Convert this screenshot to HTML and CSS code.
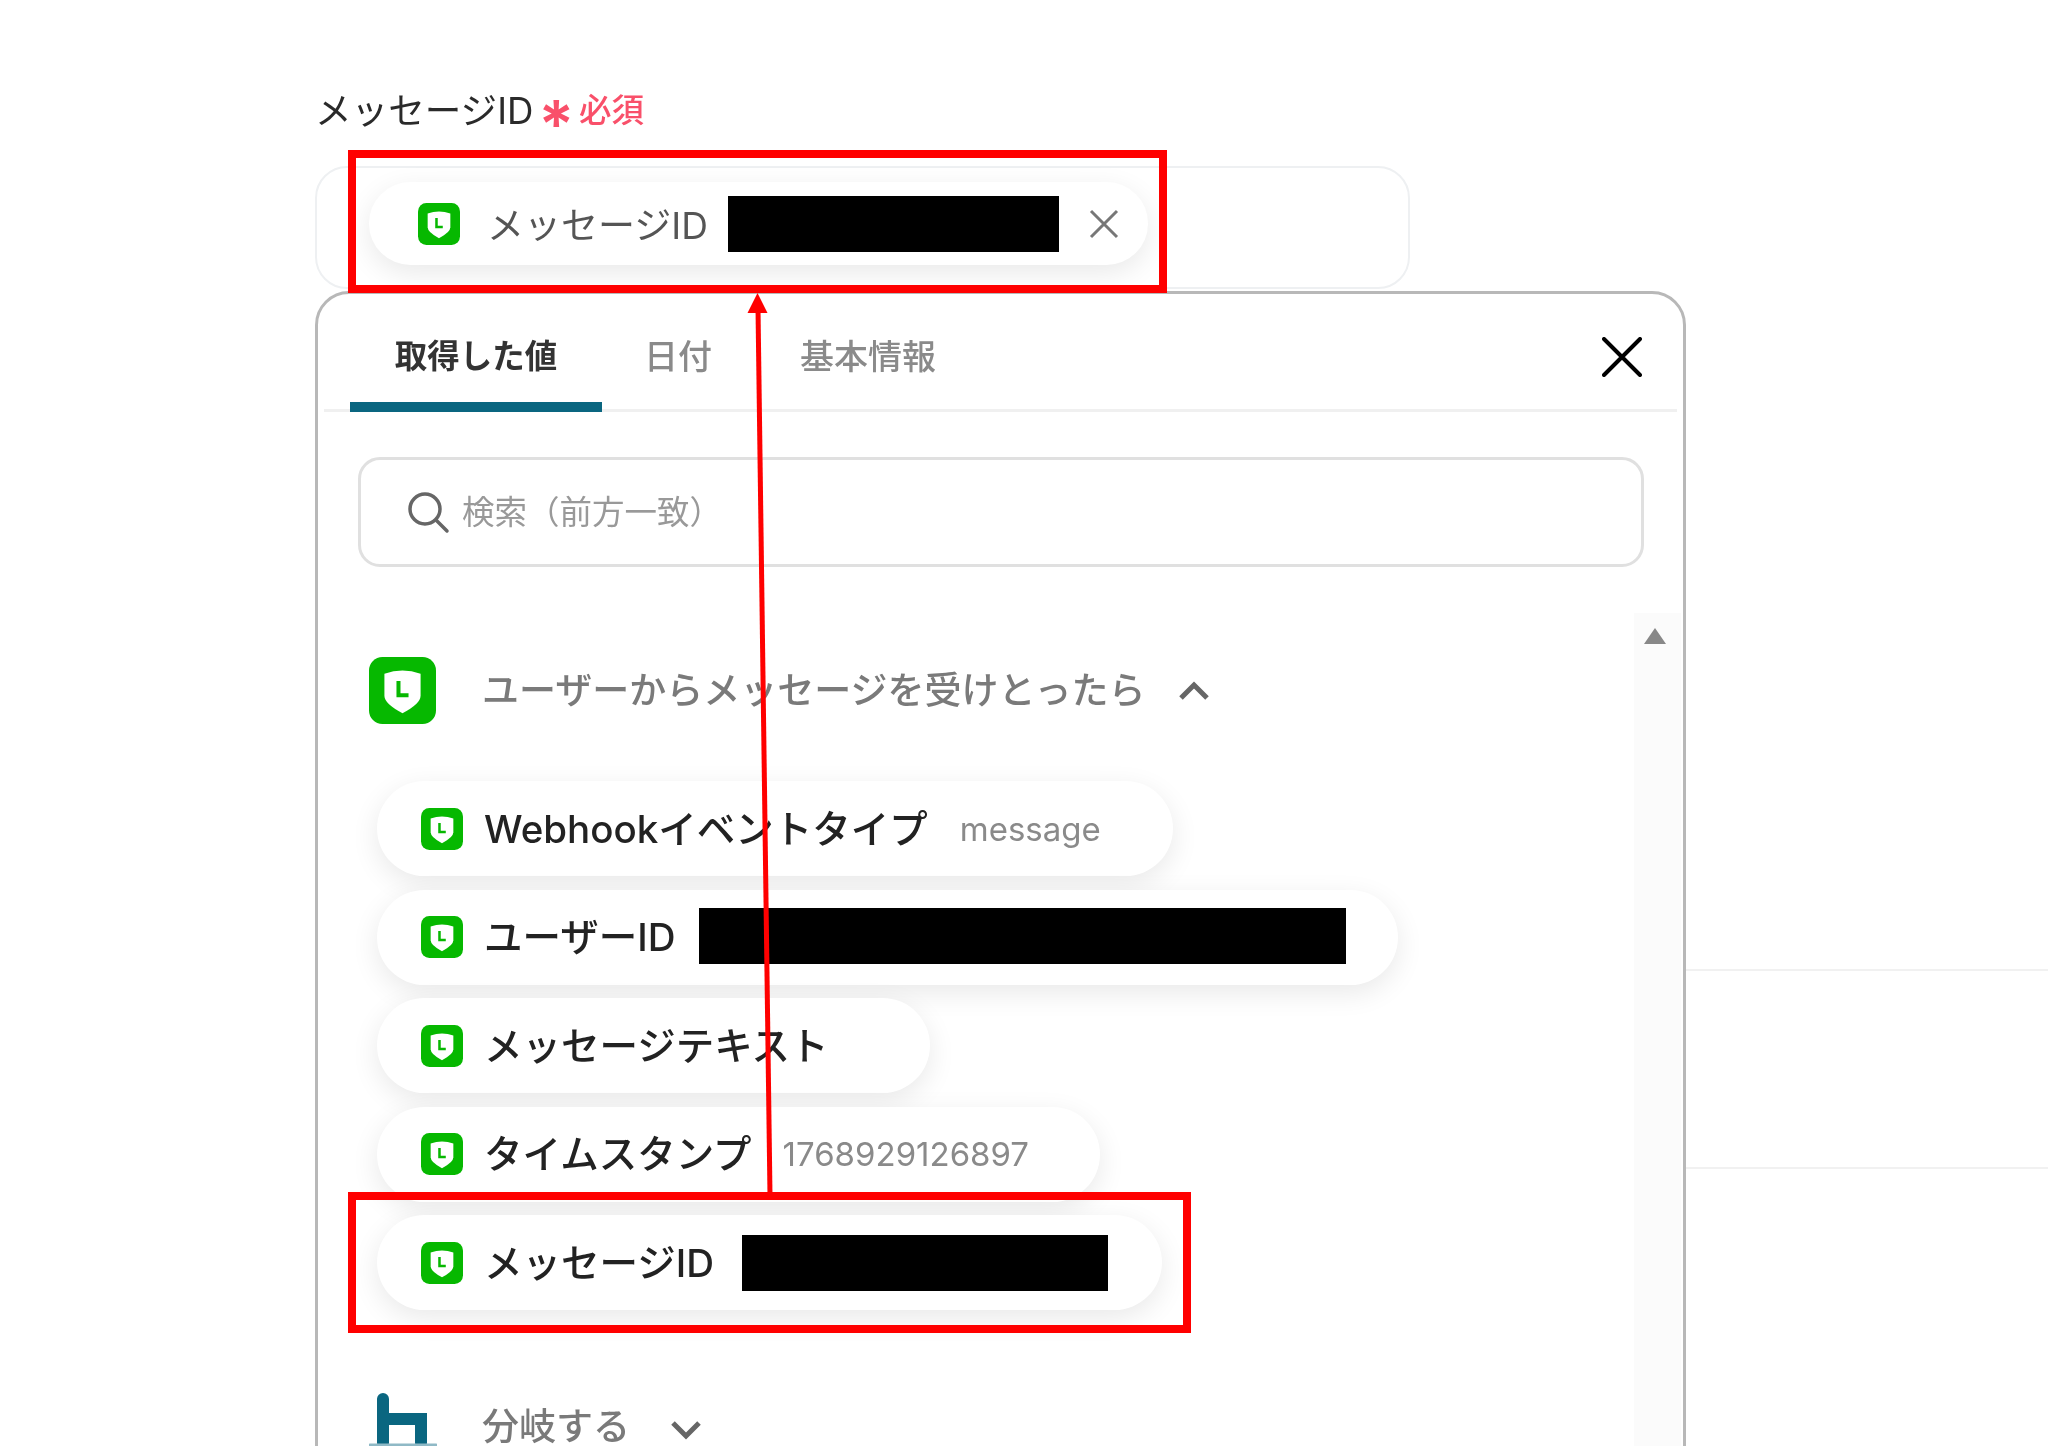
FILE: index.html
```html
<!DOCTYPE html>
<html lang="ja">
<head>
<meta charset="utf-8">
<title>メッセージID</title>
<link rel="stylesheet" href="styles.css">
</head>
<body>
<svg class="defs" width="0" height="0" aria-hidden="true">
  <symbol id="line" viewBox="0 0 100 100">
    <rect width="100" height="100" rx="20" fill="#06b800"/>
    <path d="M23 25Q50 15 77 25V58Q77 70 50 84Q23 70 23 58Z" fill="#fff"/>
    <path d="M44 36V57H59" fill="none" stroke="#06b800" stroke-width="6"/>
  </symbol>
</svg>
<div class="page">
  <div class="form">
    <div class="label"><span>メッセージID</span><span class="req"><span class="star">*</span>必須</span></div>
    <div class="field">
      <div class="chip chip-top">
        <svg class="ico"><use href="#line"/></svg>
        <span class="chip-name">メッセージID</span>
        <span class="mask mask-top"></span>
        <svg class="chip-x" viewBox="0 0 32 32"><path d="M3 3L29 29M29 3L3 29"/></svg>
      </div>
    </div>
    <div class="panel">
      <div class="tabs">
        <div class="tab active">取得した値</div>
        <div class="tab">日付</div>
        <div class="tab">基本情報</div>
        <svg class="close" viewBox="0 0 40 40"><path d="M2 2L38 38M38 2L2 38"/></svg>
      </div>
      <div class="search">
        <svg class="search-ico" viewBox="0 0 44 44"><circle cx="19" cy="19" r="15"/><path d="M30 30L41 41"/></svg>
        <span class="search-text">検索（前方一致）</span>
      </div>
      <div class="body">
        <div class="list">
          <div class="group">
            <svg class="group-ico"><use href="#line"/></svg>
            <span class="group-name">ユーザーからメッセージを受けとったら</span>
            <svg class="chev" viewBox="0 0 32 20"><path d="M3 17L16 4L29 17"/></svg>
          </div>
          <div class="chips">
            <div class="chip chip-a">
              <svg class="ico"><use href="#line"/></svg>
              <span class="chip-name">Webhookイベントタイプ</span>
              <span class="val val-a">message</span>
            </div>
            <div class="chip chip-b">
              <svg class="ico"><use href="#line"/></svg>
              <span class="chip-name">ユーザーID</span>
              <span class="mask mask-b"></span>
            </div>
            <div class="chip chip-c">
              <svg class="ico"><use href="#line"/></svg>
              <span class="chip-name">メッセージテキスト</span>
            </div>
            <div class="chip chip-d">
              <svg class="ico"><use href="#line"/></svg>
              <span class="chip-name">タイムスタンプ</span>
              <span class="val val-d">1768929126897</span>
            </div>
            <div class="chip chip-e">
              <svg class="ico"><use href="#line"/></svg>
              <span class="chip-name">メッセージID</span>
              <span class="mask mask-e"></span>
            </div>
          </div>
          <div class="group group-next">
            <svg class="branch-ico" viewBox="0 0 68 56"><path d="M14 6V50M14 26H52V50"/><path class="foot" d="M1 52H67"/></svg>
            <span class="group-name">分岐する</span>
            <svg class="chev" viewBox="0 0 32 20"><path d="M3 3L16 16L29 3"/></svg>
          </div>
        </div>
        <div class="scroll"><div class="scroll-up"></div></div>
      </div>
    </div>
  </div>
  <div class="side">
    <div class="side-line first"></div>
    <div class="side-line second"></div>
  </div>
  <div class="mark mark-top"></div>
  <div class="mark mark-bottom"></div>
  <svg class="arrow" viewBox="0 0 30 902"><path class="shaft" d="M24 902L12 15"/><path class="head" d="M11.500 0L1.500 20H21.500Z"/></svg>
</div>
</body>
</html>
```
FILE: styles.css
```css
* { box-sizing: border-box; }
html, body { margin: 0; padding: 0; background: #fff; }
body { font-family: Inter, "Noto Sans CJK JP", "Noto Sans", sans-serif; color: #333; }
.defs { position: absolute; }
.page { position: relative; width: 2048px; height: 1446px; overflow: hidden; display: flex; padding: 88px 0 0 315px; }
.form { flex: 0 0 1371px; filter: blur(.5px); }
.side { flex: 1; }
.side-line { height: 2px; background: #f1f1f1; }
.side-line.first { margin-top: 881px; }
.side-line.second { margin-top: 196px; }

.label { height: 46px; display: flex; align-items: center; gap: 5px; font-size: 36.600px; line-height: 46px; color: #2a2a2a; }
.req { color: #f9506a; font-size: 32.500px; font-weight: 500; display: flex; align-items: center; gap: 5px; }
.star { font-size: 66px; line-height: 46px; height: 46px; margin-top: 26px; font-weight: 600; }

.field { margin-top: 32px; width: 1095px; height: 123px; border: 2px solid #eef0f2; border-radius: 32px; padding: 14px 0 0 52px; }
.chip { display: flex; align-items: center; background: #fff; border-radius: 48px; box-shadow: 0 8px 28px rgba(0,0,0,.09); font-size: 38.500px; font-weight: 500; color: #222; white-space: nowrap; }
.chip-top { width: 779px; height: 83px; padding-left: 49px; font-weight: 400; color: #555; }
.ico { width: 42px; height: 42px; flex: none; }
.chip-name { margin-left: 21px; padding-bottom: 6px; }
.chip-top .chip-name { margin-left: 27px; padding-bottom: 2px; font-size: 37px; }
.mask { background: #000; flex: none; height: 56px; }
.mask-top { width: 331px; margin-left: 20px; }
.chip-x { width: 32px; height: 32px; margin-left: 29px; }
.chip-x path { fill: none; stroke: #777; stroke-width: 3; }

.panel { margin-top: 2px; width: 1371px; height: 1200px; border: 3px solid #b8b8b8; border-radius: 34px; background: #fff; position: relative; }
.tabs { height: 118px; margin: 0 6px; display: flex; padding-left: 26px; border-bottom: 3px solid #f0f0f0; position: relative; }
.tab { height: 118px; padding: 35px 46px 0 42px; font-size: 34px; line-height: 56px; font-weight: 500; color: #8a8a8a; }
.tab.active { width: 252px; padding: 35px 0 0; text-align: center; font-size: 32.500px; font-weight: 700; color: #333; border-bottom: 10px solid #0a6680; border-radius: 8px 8px 0 0; }
.close { position: absolute; right: 35px; top: 43px; width: 40px; height: 40px; }
.close path { fill: none; stroke: #000; stroke-width: 4; stroke-linecap: round; }

.search { margin: 45px 0 0 40px; width: 1286px; height: 110px; border: 3px solid #e0e0e0; border-radius: 22px; display: flex; align-items: center; padding-left: 45px; gap: 12px; font-size: 32.500px; color: #999; }
.search-ico { width: 44px; height: 44px; flex: none; }
.search-ico circle, .search-ico path { fill: none; stroke: #666; stroke-width: 3.500; stroke-linecap: round; }
.search-text { padding-bottom: 6px; }

.body { display: flex; margin-top: 46px; }
.list { flex: 1; padding: 44px 0 0 51px; }
.scroll { flex: 0 0 47px; height: 900px; background: #fbfbfb; margin-right: 2px; padding-top: 15px; }
.scroll-up { width: 0; height: 0; margin-left: 10px; border-left: 11px solid transparent; border-right: 11px solid transparent; border-bottom: 16px solid #888; }

.group { display: flex; align-items: center; height: 67px; }
.group-ico { width: 67px; height: 67px; flex: none; }
.group-name { margin-left: 46px; padding-bottom: 6px; font-size: 37px; font-weight: 500; color: #7a7a7a; white-space: nowrap; }
.chev { width: 32px; height: 20px; margin-left: 33px; flex: none; }
.chev path { fill: none; stroke: #666; stroke-width: 5; }

.chips { margin: 57px 0 0 8px; display: flex; flex-direction: column; gap: 13.500px; }
.chip-a, .chip-b, .chip-c, .chip-d, .chip-e { height: 95px; padding-left: 44px; }
.chip-a { width: 796px; }
.chip-b { width: 1021px; }
.chip-c { width: 553px; }
.chip-d { width: 723px; }
.chip-e { width: 785px; }
.val { font-size: 33px; font-weight: 400; color: #8a8a8a; }
.val-a { margin-left: 32px; }
.val-d { margin-left: 31px; }
.mask-b { width: 647px; margin-left: 23px; margin-bottom: 2px; }
.mask-e { width: 366px; margin-left: 28px; }

.group-next { margin-top: 83px; }
.branch-ico { width: 68px; height: 56px; flex: none; align-self: flex-start; }
.branch-ico path { fill: none; stroke: #0a6680; stroke-width: 12; stroke-linecap: round; }
.branch-ico .foot { stroke: #8fb9c6; stroke-width: 3; }
.group-next .group-name { margin: 0 0 0 45px; padding-bottom: 0; font-size: 37px; line-height: 37px; }
.group-next .chev { margin: 6px 0 0 40px; }

.mark { position: absolute; border: 8px solid #f00; }
.mark-top { left: 348px; top: 150px; width: 819px; height: 143px; }
.mark-bottom { left: 348px; top: 1192px; width: 843px; height: 141px; }
.arrow { position: absolute; left: 746px; top: 293px; width: 30px; height: 902px; }
.shaft { fill: none; stroke: #f00; stroke-width: 5; }
.head { fill: #f00; }
```
